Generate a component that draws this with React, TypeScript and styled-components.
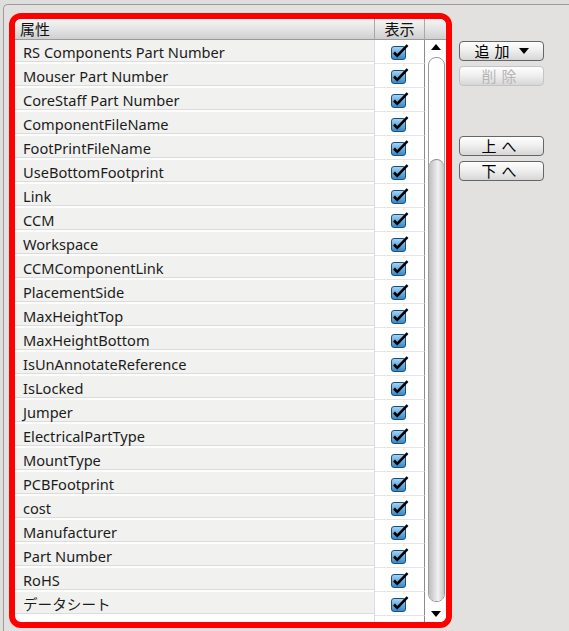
import styled, {createGlobalStyle} from "styled-components";

const GlobalStyle = createGlobalStyle`
  html, body {
    margin: 0;
    padding: 0;
    background: #e0dedd;
  }
  body {
    font-family: "Noto Sans", "Noto Sans CJK JP", sans-serif;
    overflow: hidden;
  }
`;

const attributes = [
  "RS Components Part Number",
  "Mouser Part Number",
  "CoreStaff Part Number",
  "ComponentFileName",
  "FootPrintFileName",
  "UseBottomFootprint",
  "Link",
  "CCM",
  "Workspace",
  "CCMComponentLink",
  "PlacementSide",
  "MaxHeightTop",
  "MaxHeightBottom",
  "IsUnAnnotateReference",
  "IsLocked",
  "Jumper",
  "ElectricalPartType",
  "MountType",
  "PCBFootprint",
  "cost",
  "Manufacturer",
  "Part Number",
  "RoHS",
  "データシート"
];

const Page = styled.div`
  margin: 4px 0 0 3px;
  height: 627px;
  border-top: 1px solid #9c9c9c;
  border-left: 1px solid #9c9c9c;
  border-top-left-radius: 5px;
  background: #e3e1e0;
  display: flex;
  align-items: flex-start;
  padding: 8px 0 0 5px;
  box-sizing: border-box;
`;

const Frame = styled.div`
  width: 443px;
  height: 615px;
  box-sizing: border-box;
  border: 6px solid #ff0000;
  border-radius: 12px;
  background: #fff;
  display: grid;
  grid-template-columns: 360px 50px 21px;
  grid-template-rows: 21px 1fr;
  overflow: hidden;
`;

const HeaderCell = styled.div<{$center?: boolean; $last?: boolean}>`
  height: 21px;
  box-sizing: border-box;
  background: linear-gradient(#f6f6f6, #e2e2e2 55%, #cfcfcf);
  border-bottom: 1px solid #9a9a9a;
  border-right: ${(p) => (p.$last ? "none" : "1px solid #a8a8a8")};
  font-size: 15px;
  line-height: 20px;
  color: #111;
  padding-left: ${(p) => (p.$center ? "0" : "5px")};
  text-align: ${(p) => (p.$center ? "center" : "left")};
  font-family: "Noto Sans CJK JP", sans-serif;
`;

const Body = styled.div`
  grid-column: 1 / 3;
  display: flex;
  flex-direction: column;
`;

const Row = styled.div`
  display: grid;
  grid-template-columns: 360px 50px;
  height: 24px;
`;

const NameCell = styled.div`
  box-sizing: border-box;
  border-right: 1px solid #dcdce8;
  background: linear-gradient(
    #f1f1ef 0,
    #f1f1ef 21px,
    #dcdcdc 21px,
    #dcdcdc 22px,
    #fdfdfd 22px
  );
  padding: 1px 0 0 8px;
  font-size: 14.6px;
  line-height: 23px;
  color: #1c1c1c;
  white-space: nowrap;
`;

const CheckCell = styled.div`
  box-sizing: border-box;
  border-right: 1px solid #8c8c8c;
  border-bottom: 1px solid #e4e4ec;
  display: flex;
  justify-content: center;
  align-items: flex-start;
  padding-top: 4px;
  padding-left: 2px;
`;

const Filler = styled.div`
  flex: 1;
  display: grid;
  grid-template-columns: 360px 50px;
`;

const FillerName = styled.div`
  border-right: 1px solid #dcdce8;
`;

const FillerCheck = styled.div`
  border-right: 1px solid #8c8c8c;
`;

const ScrollBar = styled.div`
  display: flex;
  flex-direction: column;
  align-items: center;
  background: #fff;
`;

const Arrow = styled.div<{$down?: boolean}>`
  width: 0;
  height: 0;
  border-left: 5px solid transparent;
  border-right: 5px solid transparent;
  ${(p) =>
    p.$down
      ? "border-top: 6px solid #000; margin: 9px 0 5px;"
      : "border-bottom: 6px solid #000; margin: 4px 0 7px;"}
`;

const Track = styled.div`
  flex: 1;
  width: 17px;
  margin-left: 1px;
  box-sizing: border-box;
  border: 1px solid #9a9a9a;
  border-radius: 8px;
  background: #fff;
  display: flex;
  flex-direction: column;
  justify-content: flex-end;
  overflow: hidden;
`;

const Thumb = styled.div`
  height: 442px;
  box-sizing: border-box;
  border-top: 1px solid #8a8a8a;
  border-radius: 8px 8px 0 0;
  background: linear-gradient(90deg, #bdbdbd, #e4e4e4 45%, #f2f2f2 60%, #c6c6c6);
`;

const Side = styled.div`
  margin: 28px 0 0 7px;
  display: flex;
  flex-direction: column;
  gap: 5px;
`;

const Button = styled.button<{$gapAbove?: number}>`
  width: 85px;
  height: 20px;
  margin-top: ${(p) => p.$gapAbove ?? 0}px;
  box-sizing: border-box;
  border: 1px solid ${(p) => (p.disabled ? "#c4c4c4" : "#666")};
  border-radius: 4px;
  background: linear-gradient(#fefefe, #f0f0f0 45%, #d6d6d6);
  color: ${(p) => (p.disabled ? "#b6b6b6" : "#000")};
  font-family: "Noto Sans CJK JP", sans-serif;
  font-size: 15px;
  line-height: 18px;
  letter-spacing: 5px;
  padding: 0;
  display: flex;
  justify-content: center;
  align-items: center;
  gap: 2px;
`;

const DropArrow = styled.span`
  width: 0;
  height: 0;
  border-left: 5px solid transparent;
  border-right: 5px solid transparent;
  border-top: 6px solid #000;
  margin-left: 2px;
`;

const CheckBox = () => (
  <svg width="19" height="17" viewBox="0 0 19 17">
    <defs>
      <linearGradient id="cb" x1="0" y1="0" x2="0" y2="1">
        <stop offset="0" stopColor="#a8d4f4" />
        <stop offset="1" stopColor="#2f86cc" />
      </linearGradient>
    </defs>
    <rect x="0.5" y="2.5" width="14" height="13" rx="2.5" fill="url(#cb)" stroke="#1c4f7e" />
    <path d="M3 8.5 L6.2 11.8 L16.5 1.2" fill="none" stroke="#000" strokeWidth="2.6" />
  </svg>
);

const App = () => (
  <>
    <GlobalStyle />
    <Page>
      <Frame>
        <HeaderCell>属性</HeaderCell>
        <HeaderCell $center>表示</HeaderCell>
        <HeaderCell $last />
        <Body>
          {attributes.map((name) => (
            <Row key={name}>
              <NameCell>{name}</NameCell>
              <CheckCell>
                <CheckBox />
              </CheckCell>
            </Row>
          ))}
          <Filler>
            <FillerName />
            <FillerCheck />
          </Filler>
        </Body>
        <ScrollBar>
          <Arrow />
          <Track>
            <Thumb />
          </Track>
          <Arrow $down />
        </ScrollBar>
      </Frame>
      <Side>
        <Button>
          追加
          <DropArrow />
        </Button>
        <Button disabled>削除</Button>
        <Button $gapAbove={45}>上へ</Button>
        <Button>下へ</Button>
      </Side>
    </Page>
  </>
);

export default App;
